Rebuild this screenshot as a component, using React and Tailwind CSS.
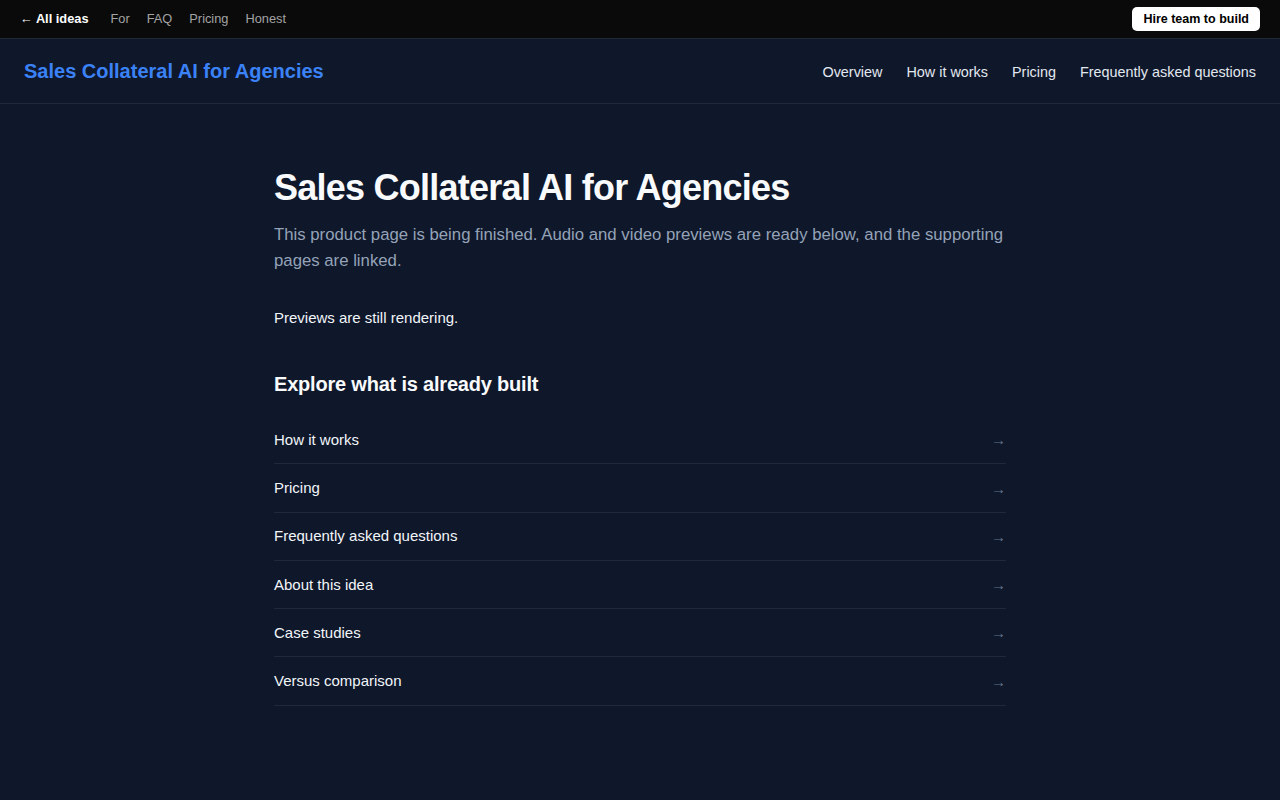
import React from "react";

const topLinks = ["For", "FAQ", "Pricing", "Honest"];
const headerLinks = ["Overview", "How it works", "Pricing", "Frequently asked questions"];
const explore = [
  "How it works",
  "Pricing",
  "Frequently asked questions",
  "About this idea",
  "Case studies",
  "Versus comparison",
];

export default function App() {
  return (
    <div
      className="min-h-screen bg-[#0f172a] text-[#f1f5f9]"
      style={{ fontFamily: '"Liberation Sans", Arial, sans-serif' }}
    >
      <div className="flex h-[39px] items-center justify-between border-b border-[#1f2937] bg-[#0a0a0a] px-5">
        <div className="flex items-center gap-[22px] text-[12.8px]">
          <a className="font-bold text-white">← All ideas</a>
          <div className="flex items-center gap-[17px] text-[#a3a3a3]">
            {topLinks.map((l) => (
              <a key={l}>{l}</a>
            ))}
          </div>
        </div>
        <button className="h-6 rounded-[5px] bg-white px-[11px] text-[12.5px] font-bold text-black">
          Hire team to build
        </button>
      </div>

      <header className="flex h-[65px] items-center justify-between border-b border-[#1e293b] px-6">
        <div className="text-[20px] font-bold text-[#3b82f6]">Sales Collateral AI for Agencies</div>
        <nav className="mt-[4px] flex items-center gap-6 text-[14.4px] text-[#e2e8f0]">
          {headerLinks.map((l) => (
            <a key={l}>{l}</a>
          ))}
        </nav>
      </header>

      <main className="mx-auto w-[732px] pt-[60px] pb-24">
        <h1 className="text-[36px] font-bold leading-[48px] tracking-[-0.75px] text-[#f8fafc]">
          Sales Collateral AI for Agencies
        </h1>
        <p className="mt-[10px] text-[16.75px] leading-[26px] text-[#94a3b8]">
          This product page is being finished. Audio and video previews are ready below, and the supporting
          pages are linked.
        </p>
        <p className="mt-[32px] text-[15px] leading-[24px] text-[#f1f5f9]">Previews are still rendering.</p>

        <h2 className="mt-[40px] text-[20px] font-bold leading-[28px] tracking-[-0.2px] text-[#f8fafc]">
          Explore what is already built
        </h2>
        <ul className="mt-[18px]">
          {explore.map((l) => (
            <li
              key={l}
              className="flex h-[48.25px] items-center justify-between border-b border-[#1e293b] pt-[1px] text-[15px] text-[#f1f5f9]"
            >
              <span>{l}</span>
              <span className="mt-[1px] text-[15px] text-[#64748b]">→</span>
            </li>
          ))}
        </ul>
      </main>
    </div>
  );
}
